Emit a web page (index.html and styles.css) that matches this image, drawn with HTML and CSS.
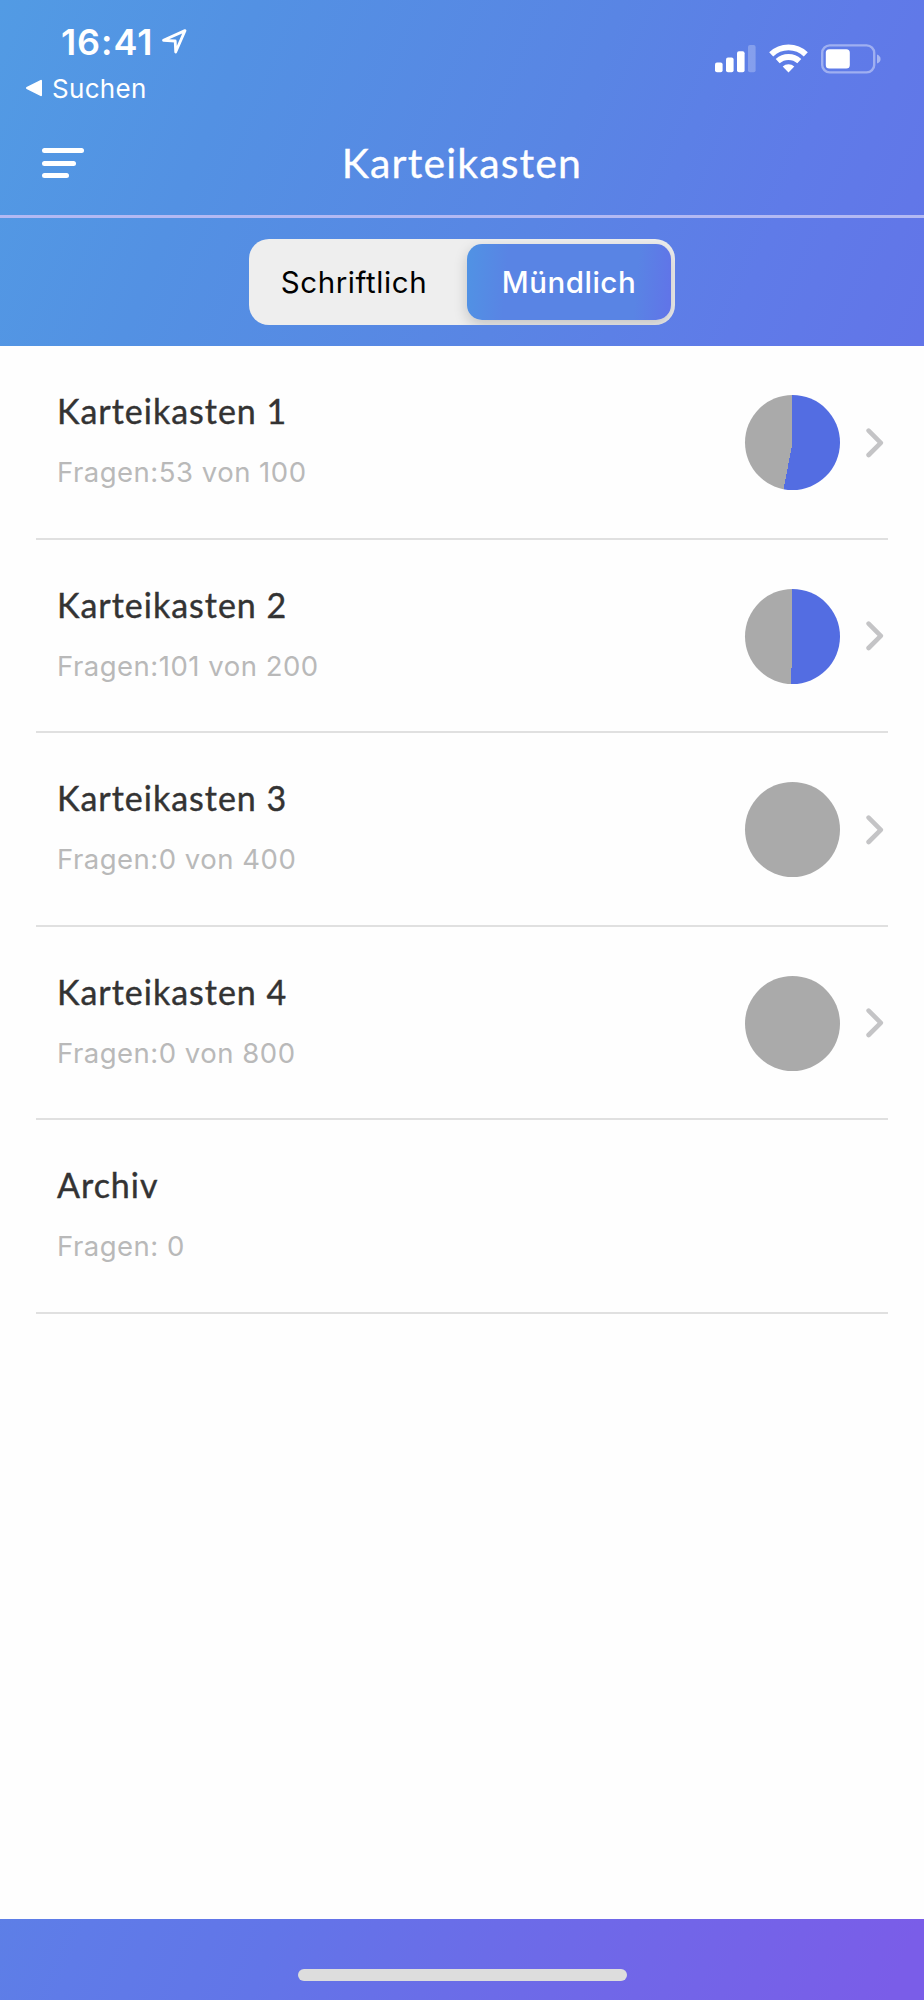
FILE: index.html
```html
<!DOCTYPE html>
<html lang="de">
<head>
    <meta charset="UTF-8">
    <meta name="viewport" content="width=device-width, initial-scale=1.0">
    <title>Karteikasten</title>
    <link rel="stylesheet" href="styles.css">
</head>
<body>
    <div class="app">
        <header class="header">
            <div class="status-bar">
                <div class="status-left">
                    <div class="time-row">
                        <span class="time">16:41</span>
                        <svg class="location" width="28" height="28" viewBox="0 0 28 28">
                            <path d="M2.5 12.3 L24 2.6 L14.7 24 L14.2 13 Z" fill="none" stroke="#fff" stroke-width="2.8" stroke-linejoin="round"/>
                        </svg>
                    </div>
                    <div class="back-row">
                        <svg width="18" height="18" viewBox="0 0 18 18">
                            <path d="M2 9 L16 1.8 V16.2 Z" fill="#fff" stroke="#fff" stroke-width="2" stroke-linejoin="round"/>
                        </svg>
                        <span class="back">Suchen</span>
                    </div>
                </div>
                <div class="status-right">
                    <svg width="42" height="30" viewBox="0 0 42 30" fill="#fff">
                        <rect x="0" y="18.5" width="7.6" height="9.7" rx="2"/>
                        <rect x="11" y="13.5" width="7.6" height="14.7" rx="2"/>
                        <rect x="22" y="7.2" width="7.6" height="21" rx="2"/>
                        <rect x="33" y="1" width="7.6" height="27.2" rx="2" opacity="0.25"/>
                    </svg>
                    <svg width="40" height="30" viewBox="0 0 40 30">
                        <g fill="none" stroke="#fff" stroke-width="5.8">
                            <path d="M2.2 10.4 A25 25 0 0 1 36.8 10.4"/>
                            <path d="M8.7 17.2 A16 16 0 0 1 30.3 17.2"/>
                        </g>
                        <path d="M13.7 22.4 A9 9 0 0 1 25.3 22.4 L19.5 28.4 Z" fill="#fff"/>
                    </svg>
                    <svg width="60" height="30" viewBox="0 0 60 30">
                        <rect x="1.2" y="1.4" width="52" height="27" rx="7.5" fill="none" stroke="#fff" stroke-opacity="0.4" stroke-width="2.4"/>
                        <rect x="4.8" y="5.2" width="24" height="19.2" rx="3.5" fill="#fff"/>
                        <path d="M56 10.5 Q59.6 12 59.6 15 Q59.6 18 56 19.5 Z" fill="#fff" fill-opacity="0.45"/>
                    </svg>
                </div>
            </div>
            <nav class="nav">
                <div class="menu">
                    <span class="menu-line"></span>
                    <span class="menu-line medium"></span>
                    <span class="menu-line short"></span>
                </div>
                <h1>Karteikasten</h1>
            </nav>
            <div class="tabs-bar">
                <div class="tabs">
                    <div class="tab">Schriftlich</div>
                    <div class="tab active">Mündlich</div>
                </div>
            </div>
        </header>

        <main class="list">
            <div class="row">
                <div class="row-text">
                    <h2>Karteikasten 1</h2>
                    <p>Fragen:53 von 100</p>
                </div>
                <div class="pie" style="--part: 53%"></div>
                <svg class="chevron" width="18" height="30" viewBox="0 0 18 30"><path d="M2.6 2.6 L14.8 14.8 L2.6 27"/></svg>
            </div>
            <div class="row">
                <div class="row-text">
                    <h2>Karteikasten 2</h2>
                    <p>Fragen:101 von 200</p>
                </div>
                <div class="pie" style="--part: 50.5%"></div>
                <svg class="chevron" width="18" height="30" viewBox="0 0 18 30"><path d="M2.6 2.6 L14.8 14.8 L2.6 27"/></svg>
            </div>
            <div class="row">
                <div class="row-text">
                    <h2>Karteikasten 3</h2>
                    <p>Fragen:0 von 400</p>
                </div>
                <div class="pie" style="--part: 0%"></div>
                <svg class="chevron" width="18" height="30" viewBox="0 0 18 30"><path d="M2.6 2.6 L14.8 14.8 L2.6 27"/></svg>
            </div>
            <div class="row">
                <div class="row-text">
                    <h2>Karteikasten 4</h2>
                    <p>Fragen:0 von 800</p>
                </div>
                <div class="pie" style="--part: 0%"></div>
                <svg class="chevron" width="18" height="30" viewBox="0 0 18 30"><path d="M2.6 2.6 L14.8 14.8 L2.6 27"/></svg>
            </div>
            <div class="row">
                <div class="row-text">
                    <h2>Archiv</h2>
                    <p>Fragen: 0</p>
                </div>
            </div>
        </main>

        <footer class="footer">
            <div class="home-bar"></div>
        </footer>
    </div>
</body>
</html>
```
FILE: styles.css
```css
* {
    box-sizing: border-box;
}
body {
    margin: 0;
    font-family: Inter, "Liberation Sans", sans-serif;
}
.app {
    display: flex;
    flex-direction: column;
    height: 2000px;
    background: linear-gradient(112deg, #529be4 0%, #5391e3 15%, #5985e4 36%, #5f7be8 50%, #6275e8 61%, #6c6be8 75%, #7a5de8 98%);
}
.header {
    height: 346px;
    color: white;
}

/* status bar */
.status-bar {
    display: flex;
    justify-content: space-between;
    height: 109px;
    padding: 20px 43px 0 25px;
}
.time-row {
    display: flex;
    align-items: center;
    height: 44px;
    padding-left: 36px;
    gap: 8px;
}
.time {
    font-size: 36px;
    font-weight: 600;
    letter-spacing: 0.9px;
}
.back-row {
    display: flex;
    align-items: center;
    height: 32px;
    margin-top: 8px;
    gap: 9px;
}
.back {
    font-size: 26px;
    letter-spacing: 0.3px;
}
.status-right {
    display: flex;
    gap: 12px;
    padding-top: 24px;
}

/* title bar */
.nav {
    display: grid;
    grid-template-columns: 1fr auto 1fr;
    align-items: center;
    height: 109px;
    padding: 2px 42px 0;
    border-bottom: 3px solid #b3b9f3;
}
.menu {
    display: flex;
    flex-direction: column;
    gap: 7.5px;
}
.menu-line {
    width: 42px;
    height: 5px;
    border-radius: 3px;
    background: white;
}
.menu-line.medium {
    width: 34px;
}
.menu-line.short {
    width: 27px;
}
.nav h1 {
    margin: 0;
    font-family: Lato, sans-serif;
    font-size: 41px;
    font-weight: 400;
    line-height: 50px;
    letter-spacing: 1.15px;
    -webkit-text-stroke: 0.3px white;
}

/* tabs */
.tabs-bar {
    display: flex;
    justify-content: center;
    padding-top: 21px;
}
.tabs {
    display: flex;
    width: 426px;
    height: 86px;
    padding: 5px 4px;
    border-radius: 20px;
    background: #eeeeee;
    overflow: hidden;
}
.tab {
    width: 214px;
    padding-right: 12px;
    font-size: 29.5px;
    font-weight: 400;
    line-height: 76px;
    letter-spacing: 0.6px;
    text-align: center;
    color: black;
}
.tab.active {
    width: 204px;
    padding: 0;
    border-radius: 15px;
    font-weight: 500;
    letter-spacing: 0.5px;
    color: white;
    background: linear-gradient(95deg, #5093e4 0%, #5984e4 20%, #5984e4 82%, #6075e8 98%);
    box-shadow: 0 5px 14px rgba(0, 0, 0, 0.18);
}

/* list */
.list {
    flex: 1;
    background: #fefefe;
}
.row {
    display: flex;
    align-items: center;
    height: 193.5px;
    margin: 0 36px;
    padding: 2px 4px 0 21px;
    border-bottom: 2px solid #e0e0e0;
}
.row-text {
    flex: 1;
    align-self: flex-start;
    padding-top: 43px;
}
.row h2 {
    margin: 0;
    font-family: Lato, sans-serif;
    font-size: 34px;
    font-weight: 400;
    line-height: 40px;
    letter-spacing: 1px;
    color: #333333;
    -webkit-text-stroke: 0.4px #333333;
}
.row p {
    margin: 24px 0 0;
    font-size: 27.5px;
    font-weight: 400;
    line-height: 34px;
    letter-spacing: 0.5px;
    color: #b9b9b9;
}
.pie {
    width: 95px;
    height: 95px;
    margin-right: 26px;
    border-radius: 50%;
    background: conic-gradient(#536de2 var(--part), #aaaaaa 0);
}
.chevron path {
    fill: none;
    stroke: #c4c4c6;
    stroke-width: 4.6;
    stroke-linecap: round;
    stroke-linejoin: round;
}

.footer {
    display: flex;
    justify-content: center;
    height: 81px;
    padding-top: 50px;
}
.home-bar {
    width: 329px;
    height: 12px;
    border-radius: 6px;
    background: #dddddd;
}
```
